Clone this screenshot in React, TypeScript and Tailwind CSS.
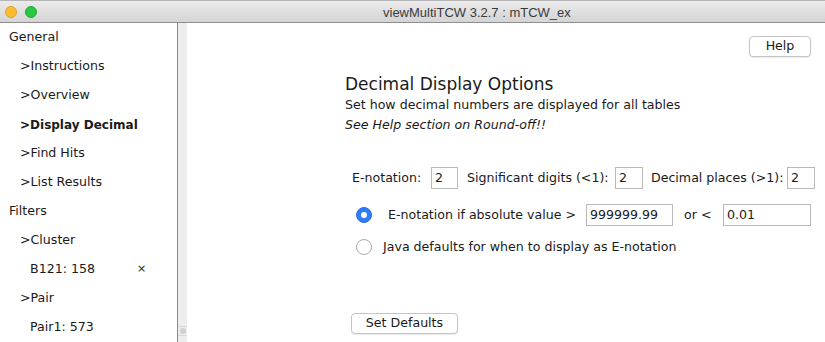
import React from "react";

const font = { fontFamily: '"DejaVu Sans", "Lucida Grande", sans-serif' };

function NavItem({ label, indent, bold }: { label: string; indent: number; bold?: boolean }) {
  const pl = indent === 0 ? "pl-[9px]" : indent === 1 ? "pl-[20px]" : "pl-[30px]";
  return (
    <div className={`h-[29px] flex items-center ${pl} text-[#1a1a1a] ${bold ? "font-bold text-[12px]" : "text-[12.6px]"}`}>
      {label}
    </div>
  );
}

function Field({ value, w }: { value: string; w: string }) {
  return (
    <div className={`h-[22px] ${w} shrink-0 border border-[#b9b9b9] bg-white flex items-center pl-[3px] text-[12.6px] text-[#1a1a1a]`}>
      {value}
    </div>
  );
}

export default function App() {
  return (
    <div className="w-[825px] h-[342px] overflow-hidden bg-white flex flex-col" style={font}>
      {/* Title bar */}
      <div className="h-[23px] shrink-0 border-t border-[#b5b5b5] border-b border-b-[#8e8e8e] bg-gradient-to-b from-[#ebebeb] to-[#d4d4d4] flex items-center relative">
        <div className="flex items-center gap-[8px] pl-[5px]">
          <div className="w-[12px] h-[12px] rounded-full bg-[#fdbc2e] border border-[#e0a127]" />
          <div className="w-[12px] h-[12px] rounded-full bg-[#28c840] border border-[#1eab31]" />
        </div>
        <div
          className="absolute left-[383px] top-[2px] text-[13px] text-[#3a3a3a]"
          style={{ fontFamily: '"Liberation Sans", Arial, sans-serif' }}
        >
          viewMultiTCW 3.2.7 : mTCW_ex
        </div>
      </div>

      <div className="flex flex-1 min-h-0">
        {/* Sidebar */}
        <div className="w-[177px] shrink-0 bg-white flex flex-col">
          <NavItem label="General" indent={0} />
          <NavItem label=">Instructions" indent={1} />
          <NavItem label=">Overview" indent={1} />
          <NavItem label=">Display Decimal" indent={1} bold />
          <NavItem label=">Find Hits" indent={1} />
          <NavItem label=">List Results" indent={1} />
          <NavItem label="Filters" indent={0} />
          <NavItem label=">Cluster" indent={1} />
          <div className="h-[29px] flex items-center pl-[30px] text-[12.6px] text-[#1a1a1a]">
            <span className="w-[107px]">B121: 158</span>
            <span className="text-[11px]">×</span>
          </div>
          <NavItem label=">Pair" indent={1} />
          <NavItem label="Pair1: 573" indent={2} />
        </div>
        {/* Splitter */}
        <div className="w-[1px] bg-[#8a8a8a] shrink-0" />
        <div className="w-[9px] shrink-0 bg-[#ededed] flex flex-col justify-end">
          <div className="h-[9px] border-t border-[#d8d8d8] flex items-center justify-center">
            <div className="w-[6px] h-[6px] rounded-full bg-[#cfcfcf]" />
          </div>
          <div className="h-[7px] border-t border-[#d8d8d8]" />
        </div>

        {/* Main */}
        <div className="flex-1 bg-white flex flex-col">
          <div className="flex justify-end pr-[14px] pt-[13px]">
            <button className="h-[21px] w-[62px] rounded-[4px] border border-[#c4c4c4] bg-white text-[12.6px] text-[#1a1a1a] shadow-[0_1px_1px_rgba(0,0,0,0.08)]">
              Help
            </button>
          </div>
          <div className="pl-[158px] flex flex-col text-[#1a1a1a]">
            <div className="mt-[17px] h-[21px] flex items-center text-[17px]">Decimal Display Options</div>
            <div className="h-[20px] flex items-center text-[12.6px]">
              Set how decimal numbers are displayed for all tables
            </div>
            <div className="h-[20px] flex items-center text-[12.6px] italic">
              See Help section on Round-off!!
            </div>

            <div className="mt-[32px] pl-[7px] flex items-center text-[12.6px] whitespace-nowrap">
              <span className="w-[79px] shrink-0">E-notation:</span>
              <Field value="2" w="w-[27px]" />
              <span className="ml-[9px] w-[148px] shrink-0">Significant digits (&lt;1):</span>
              <Field value="2" w="w-[28px]" />
              <span className="ml-[8px] w-[136px] shrink-0">Decimal places (&gt;1):</span>
              <Field value="2" w="w-[28px]" />
            </div>

            <div className="mt-[15px] pl-[11px] flex items-center text-[12.6px] whitespace-nowrap">
              <div className="w-[16px] h-[16px] shrink-0 rounded-full bg-[#2f7cf6] border border-[#2a6fe0] flex items-center justify-center">
                <div className="w-[6px] h-[6px] rounded-full bg-white" />
              </div>
              <span className="ml-[16px] w-[198px] shrink-0">E-notation if absolute value &gt;</span>
              <Field value="999999.99" w="w-[87px]" />
              <span className="ml-[11px] w-[39px] shrink-0">or &lt;</span>
              <Field value="0.01" w="w-[88px]" />
            </div>

            <div className="mt-[12px] pl-[11px] flex items-center text-[12.6px] whitespace-nowrap">
              <div className="w-[16px] h-[16px] shrink-0 rounded-full bg-white border border-[#a8a8a8]" />
              <span className="ml-[11px]">Java defaults for when to display as E-notation</span>
            </div>

            <div className="mt-[53px] pl-[6px]">
              <button className="h-[21px] w-[107px] rounded-[4px] border border-[#c4c4c4] bg-white text-[12.6px] text-[#1a1a1a] shadow-[0_1px_1px_rgba(0,0,0,0.08)]">
                Set Defaults
              </button>
            </div>
          </div>
        </div>
      </div>
    </div>
  );
}
